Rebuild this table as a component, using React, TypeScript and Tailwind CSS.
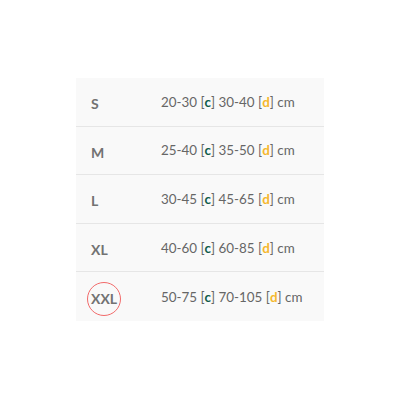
const rows = [
  { size: "S", c: "20-30", d: "30-40" },
  { size: "M", c: "25-40", d: "35-50" },
  { size: "L", c: "30-45", d: "45-65" },
  { size: "XL", c: "40-60", d: "60-85" },
  { size: "XXL", c: "50-75", d: "70-105", marked: true },
];

export default function App() {
  return (
    <div className="w-[400px] h-[400px] bg-white pt-[78px] pl-[76px] font-['Lato','Open_Sans',sans-serif]">
      <div className="w-[248px] bg-[#f9f9f9] flex flex-col divide-y divide-[#e6e6e6]">
        {rows.map((r) => (
          <div key={r.size} className="h-[48.6px] flex items-center text-[13.4px] text-[#666]">
            <div className="w-[85px] pl-[15px] relative">
              <span className="font-bold text-[14px] text-[#727272] relative top-[2px]">{r.size}</span>
              {r.marked && (
                <span className="absolute left-[11px] top-[calc(50%+2px)] -translate-y-1/2 w-[34px] h-[34px] rounded-full border-[1.5px] border-[#f26a6a]" />
              )}
            </div>
            <div>
              {r.c} [<b className="text-[#0d5c4a]">c</b>] {r.d} [<b className="text-[#f5b82e]">d</b>] cm
            </div>
          </div>
        ))}
      </div>
    </div>
  );
}
